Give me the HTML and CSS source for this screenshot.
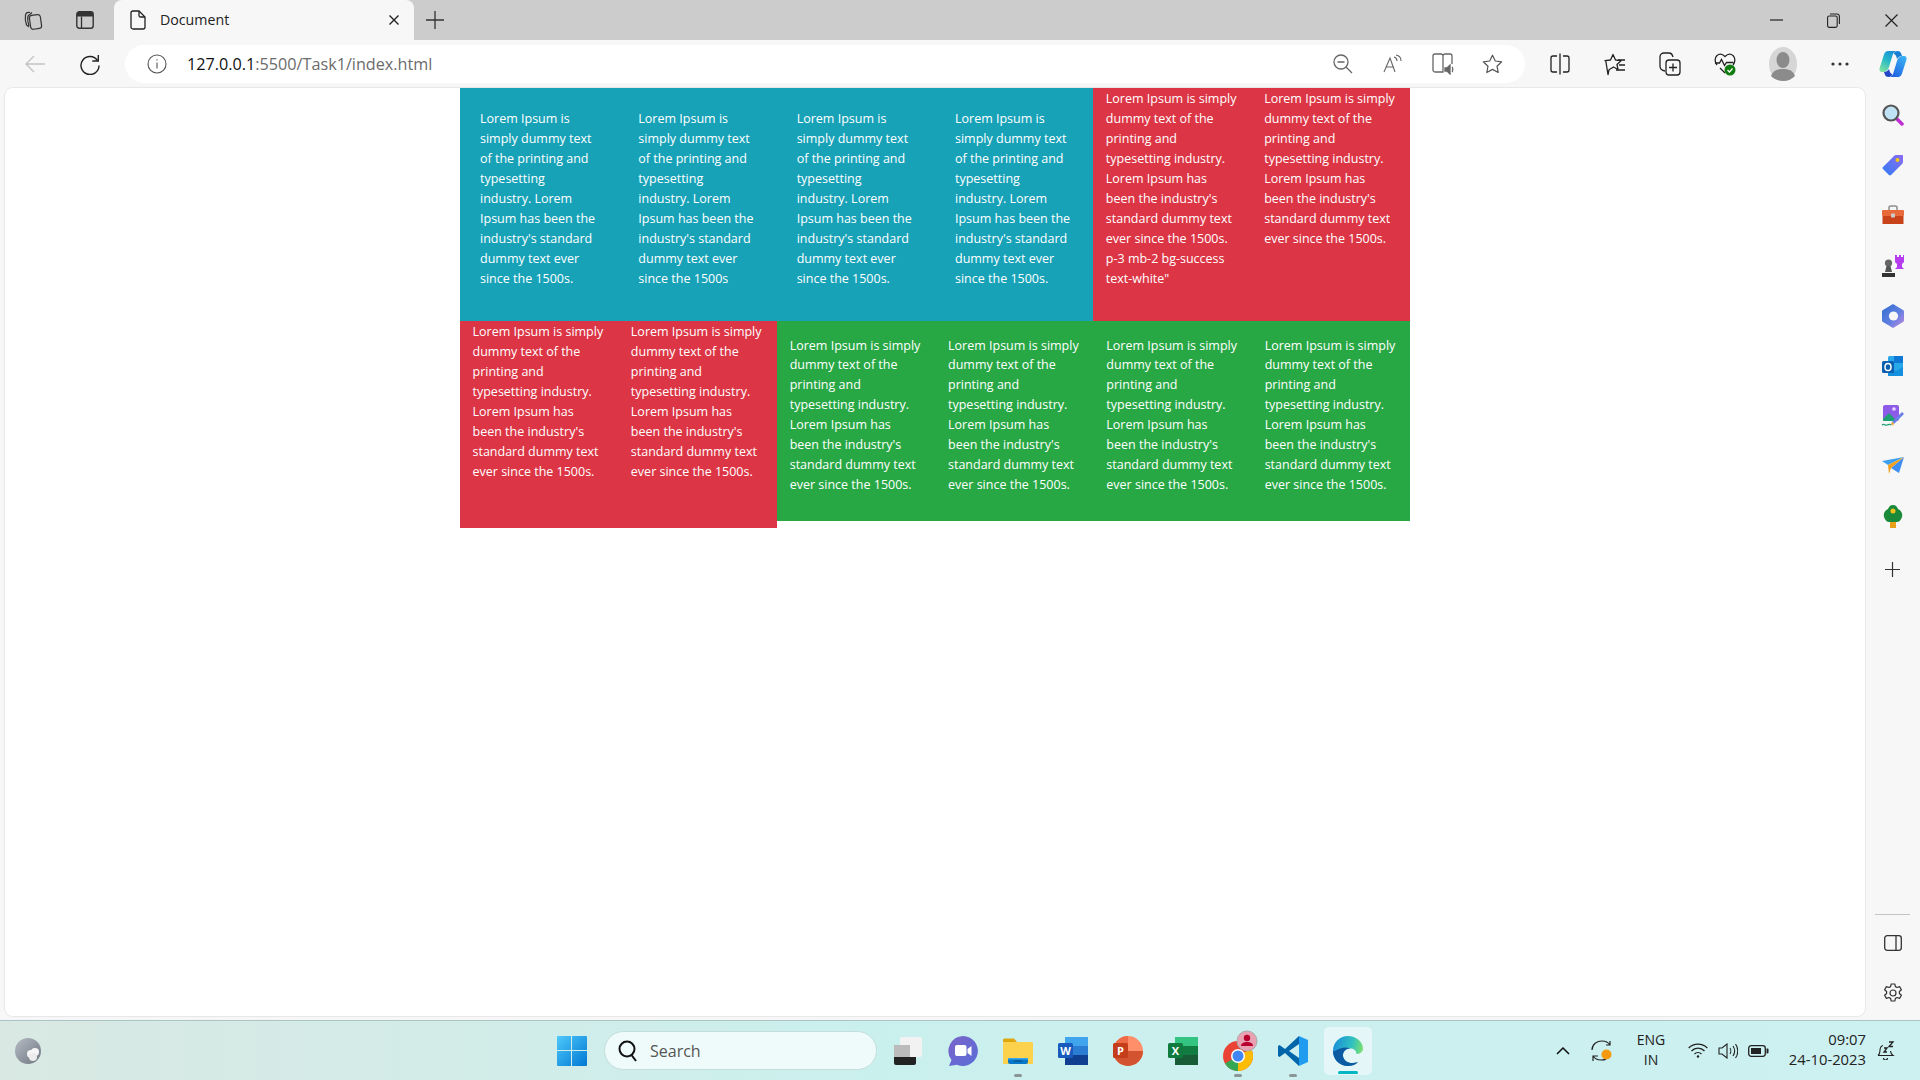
FILE: index.html
```html
<!DOCTYPE html>
<html lang="en">
<head>
<meta charset="utf-8">
<title>Document</title>
<link rel="stylesheet" href="styles.css">
</head>
<body>
<div class="titlebar">
  <div class="slot-t"><svg width="20" height="22" viewBox="0 0 20 22" fill="none" stroke="#333" stroke-width="1.2"><rect x="7" y="6" width="11" height="14" rx="2.5" transform="rotate(-8 12 13)"/><path d="M6 18 3.5 16C2.5 13 2 9 2.5 6 3 3.5 5 3 7 3.5M9 3.5 5 7c-.7 3 0 7 1 10"/></svg></div>
  <div class="slot-t"><svg width="18" height="18" viewBox="0 0 18 18" fill="none"><rect x=".8" y=".8" width="16.4" height="16.4" rx="2.5" stroke="#333" stroke-width="1.4"/><path d="M1 3.3A2.3 2.3 0 0 1 3.3 1h11.4A2.3 2.3 0 0 1 17 3.3V5.5H1Z" fill="#333"/><path d="M5.5 5.5V17" stroke="#333" stroke-width="1.3"/></svg></div>
  <div class="tab">
    <svg class="tab-file" width="16" height="20" viewBox="0 0 16 20" fill="none" stroke="#222" stroke-width="1.3"><path d="M3 1h6l6 6v10a2 2 0 0 1-2 2H3a2 2 0 0 1-2-2V3a2 2 0 0 1 2-2Z"/><path d="M9 1v4.500A1.500 1.500 0 0 0 10.500 7H15"/></svg>
    <span class="tab-title">Document</span>
    <svg class="tab-close" width="10" height="10" viewBox="0 0 10 10" stroke="#222" stroke-width="1.4"><path d="M.5.5l9 9M9.500.5l-9 9"/></svg>
  </div>
  <div class="slot-new"><svg width="18" height="18" viewBox="0 0 18 18" stroke="#333" stroke-width="1.3"><path d="M9 0v18M0 9h18"/></svg></div>
  <div class="winctl">
    <div class="slot-w"><svg width="13" height="2" viewBox="0 0 13 2" stroke="#222" stroke-width="1.2"><path d="M0 1h13"/></svg></div>
    <div class="slot-w"><svg width="13" height="15" viewBox="0 0 13 15" fill="none" stroke="#222" stroke-width="1.1"><rect x=".6" y="3" width="9.600" height="11.400" rx="1.600"/><path d="M3 1h7a2.400 2.400 0 0 1 2.400 2.400V11"/></svg></div>
    <div class="slot-w"><svg width="13" height="13" viewBox="0 0 13 13" stroke="#222" stroke-width="1.2"><path d="M.5.5l12 12M12.500.5l-12 12"/></svg></div>
  </div>
</div>

<div class="toolbar">
  <div class="slot-b"><svg width="20" height="18" viewBox="0 0 20 18" fill="none" stroke="#c4c4c4" stroke-width="1.4"><path d="M20 9H1M9 1 1 9l8 8"/></svg></div>
  <div class="slot-b"><svg width="20" height="21" viewBox="0 0 20 21" fill="none" stroke="#222" stroke-width="1.4"><path d="M17.500 6.500A9 9 0 1 0 19 11.500"/><path d="M18.300 1v6h-6"/></svg></div>
  <div class="address">
    <svg class="addr-info" width="20" height="20" viewBox="0 0 20 20" fill="none" stroke="#555" stroke-width="1.1"><circle cx="10" cy="10" r="9"/><path d="M10 8.500v6M10 5.200v1.300"/></svg>
    <span class="url"><span class="url-host">127.0.0.1</span>:5500/Task1/index.html</span>
    <div class="addr-tools">
      <div class="slot-a"><svg width="20" height="20" viewBox="0 0 20 20" fill="none" stroke="#666" stroke-width="1.300"><circle cx="8" cy="8" r="7"/><path d="M4.500 8h7M13 13l6 6"/></svg></div>
      <div class="slot-a"><svg width="20" height="20" viewBox="0 0 20 20" fill="none" stroke="#666" stroke-width="1.100"><path d="M1 18 7 4l5 14M3 13h8M11 3c2 .5 3 2 3 4M13 1c3 .5 5 3 5 6"/></svg></div>
      <div class="slot-a"><svg width="22" height="22" viewBox="0 0 22 22" fill="none" stroke="#666" stroke-width="1.300"><path d="M11 3.500V19H3a2 2 0 0 1-2-2V3a2 2 0 0 1 2-2h6a2 2 0 0 1 2 2.500c0-1.500 1-2.500 2-2.500h5a2 2 0 0 1 2 2v8"/><path d="M13 15h2l3-3v9l-3-3h-2Z" fill="#666"/><path d="M20 14c1 1 1 4 0 5"/></svg></div>
      <div class="slot-a"><svg width="21" height="20" viewBox="0 0 21 20" fill="none" stroke="#555" stroke-width="1.200"><path d="M10.500 1.200 13.300 7l6.400.8-4.700 4.400 1.200 6.300-5.700-3.100-5.700 3.100L6 12.200 1.300 7.800 7.700 7Z" stroke-linejoin="round"/></svg></div>
    </div>
  </div>
  <div class="tools">
    <div class="slot-b"><svg width="20" height="22" viewBox="0 0 20 22" fill="none" stroke="#222" stroke-width="1.300"><path d="M7 3H3a2 2 0 0 0-2 2v12a2 2 0 0 0 2 2h4M13 3h4a2 2 0 0 1 2 2v12a2 2 0 0 1-2 2h-4M10 .5v21"/></svg></div>
    <div class="slot-b"><svg width="22" height="23" viewBox="0 0 22 23" fill="none" stroke="#222" stroke-width="1.300"><path d="M9 1.500 11.500 7l5.500.7-4 3.800 1 5-4.500-2.500L5 16.800l-1 4.700L1.800 8 1 7.700 6.500 7Z" stroke-linejoin="round"/><path d="M14 7h7M15 12h6M12 17h9"/></svg></div>
    <div class="slot-b"><svg width="22" height="24" viewBox="0 0 22 24" fill="none" stroke="#222" stroke-width="1.300"><path d="M6 19c-3-.5-5-2-5-5V5c0-2.500 2-4 4-4h5c2.500 0 3.500 2 4 4"/><rect x="7" y="8" width="14" height="15" rx="3"/><path d="M14 11.500v8M10 15.500h8"/></svg></div>
    <div class="slot-b"><svg width="22" height="24" viewBox="0 0 22 24" fill="none"><path d="M3 13C.5 10 .5 6 3 3.500c2.500-2 5.500-1.500 8 1 2.500-2.500 5.500-3 8-1 2.500 2.500 2.500 6.500 0 9.500M11 21l-5-5" stroke="#222" stroke-width="1.300"/><path d="M1 11h4.500l2-3.500 3 6 2-3h7" stroke="#222" stroke-width="1.300"/><circle cx="16" cy="18" r="5.500" fill="#107c10"/><path d="M13.500 18l2 2 3-3.500" stroke="#fff" stroke-width="1.200" fill="none"/></svg></div>
    <div class="slot-b slot-avatar"><svg width="30" height="34" viewBox="0 0 30 34"><ellipse cx="15" cy="17" rx="14" ry="17" fill="#d6d6d6"/><ellipse cx="15" cy="13" rx="6.500" ry="8" fill="#8b8b8b"/><path d="M3 29c2-6 7-7 12-7s10 1 12 7c-3 3-7 5-12 5s-9-2-12-5Z" fill="#8b8b8b"/></svg></div>
    <div class="slot-b slot-dots"><svg width="18" height="4" viewBox="0 0 18 4" fill="#333"><circle cx="2" cy="2" r="1.600"/><circle cx="9" cy="2" r="1.600"/><circle cx="16" cy="2" r="1.600"/></svg></div>
    <div class="slot-b slot-copilot"><svg width="28" height="28" viewBox="0 0 28 28"><defs><linearGradient id="cp1" x1="0.700" y1="0" x2="0.200" y2="1"><stop offset="0" stop-color="#1b8fd8"/><stop offset=".45" stop-color="#25b8c8"/><stop offset="1" stop-color="#7fe2a0"/></linearGradient><linearGradient id="cp2" x1="0.800" y1="0" x2="0.200" y2="1"><stop offset="0" stop-color="#3ab0f5"/><stop offset="1" stop-color="#1f5fe0"/></linearGradient></defs><path d="M9 1h9.500c-2.500 0-4 1.500-4.700 3.500L10 17c-.8 2.500-2.500 5-6 5H3c-2 0-3-1.500-2.500-3.500L5 4.500C5.700 2.500 7 1 9 1Z" fill="url(#cp1)"/><path d="M19 27H9.500c2.500 0 4-1.500 4.700-3.500L18 11c.8-2.500 2.500-5 6-5h1c2 0 3 1.500 2.500 3.500L23 23.500C22.300 25.500 21 27 19 27Z" fill="url(#cp2)"/><path d="M18.500 1c2 0 3.500 1 4 3.500L23 6c-2 0-4 1-5 3-.5-3-2-5-3.500-5.500C15.500 2 17 1 18.500 1Z" fill="#1a7fd4"/><path d="M9.500 27c-2 0-3.500-1-4-3.500L5 22c2 0 4-1 5-3 .5 3 2 5 3.500 5.500C12.500 26 11 27 9.500 27Z" fill="#2347c8"/></svg></div>
  </div>
</div>

<div class="middle">
  <div class="viewport">
    <div class="sheet">
      <div class="row">
        <div class="group group-wide">
          <p class="cell cell-info">Lorem Ipsum is simply dummy text of the printing and typesetting industry. Lorem Ipsum has been the industry's standard dummy text ever since the 1500s.</p>
          <p class="cell cell-info">Lorem Ipsum is simply dummy text of the printing and typesetting industry. Lorem Ipsum has been the industry's standard dummy text ever since the 1500s</p>
          <p class="cell cell-info">Lorem Ipsum is simply dummy text of the printing and typesetting industry. Lorem Ipsum has been the industry's standard dummy text ever since the 1500s.</p>
          <p class="cell cell-info">Lorem Ipsum is simply dummy text of the printing and typesetting industry. Lorem Ipsum has been the industry's standard dummy text ever since the 1500s.</p>
        </div>
        <div class="group group-narrow">
          <p class="cell cell-danger">Lorem Ipsum is simply dummy text of the printing and typesetting industry. Lorem Ipsum has been the industry's standard dummy text ever since the 1500s. p-3 mb-2 bg-success text-white"</p>
          <p class="cell cell-danger">Lorem Ipsum is simply dummy text of the printing and typesetting industry. Lorem Ipsum has been the industry's standard dummy text ever since the 1500s.</p>
        </div>
      </div>
      <div class="row row-top">
        <div class="group group-narrow group-danger">
          <p class="cell cell-danger">Lorem Ipsum is simply dummy text of the printing and typesetting industry. Lorem Ipsum has been the industry's standard dummy text ever since the 1500s.</p>
          <p class="cell cell-danger">Lorem Ipsum is simply dummy text of the printing and typesetting industry. Lorem Ipsum has been the industry's standard dummy text ever since the 1500s.</p>
        </div>
        <div class="group group-wide group-success">
          <p class="cell cell-success">Lorem Ipsum is simply dummy text of the printing and typesetting industry. Lorem Ipsum has been the industry's standard dummy text ever since the 1500s.</p>
          <p class="cell cell-success">Lorem Ipsum is simply dummy text of the printing and typesetting industry. Lorem Ipsum has been the industry's standard dummy text ever since the 1500s.</p>
          <p class="cell cell-success">Lorem Ipsum is simply dummy text of the printing and typesetting industry. Lorem Ipsum has been the industry's standard dummy text ever since the 1500s.</p>
          <p class="cell cell-success">Lorem Ipsum is simply dummy text of the printing and typesetting industry. Lorem Ipsum has been the industry's standard dummy text ever since the 1500s.</p>
        </div>
      </div>
    </div>
  </div>
  <div class="sidebar">
    <div class="side-top">
      <div class="slot-s"><svg width="22" height="22" viewBox="0 0 22 22"><path d="M13 13l7 7" stroke="#c02fd0" stroke-width="3.500" stroke-linecap="round"/><circle cx="9" cy="9" r="7.500" fill="#bfe3f5" stroke="#555" stroke-width="2.200"/></svg></div>
      <div class="slot-s"><svg width="22" height="22" viewBox="0 0 22 22"><defs><linearGradient id="sd1" x1="0" y1="1" x2="1" y2="0"><stop offset="0" stop-color="#2f7cf6"/><stop offset="1" stop-color="#8c6cf0"/></linearGradient></defs><path d="M1 13 12 2c.6-.6 1.200-1 2-1h6c.6 0 1 .4 1 1v6c0 .8-.3 1.400-1 2L9 21c-.6.600-1.400.600-2 0l-6-6c-.6-.6-.6-1.400 0-2Z" fill="url(#sd1)"/><circle cx="15.500" cy="6" r="2" fill="#f5c518"/></svg></div>
      <div class="slot-s"><svg width="24" height="20" viewBox="0 0 24 20"><path d="M8 5V2.500C8 1.500 9 1 10 1h4c1 0 2 .5 2 1.500V5" fill="none" stroke="#8d8d8d" stroke-width="1.500"/><rect x="1" y="5" width="22" height="6" rx="1" fill="#e8693a"/><rect x="1.500" y="11" width="21" height="8" fill="#c8431a"/><rect x="10" y="8.500" width="4" height="4" rx=".8" fill="#ccc"/></svg></div>
      <div class="slot-s"><svg width="24" height="24" viewBox="0 0 24 24"><path d="M14 1h2v2h2V1h2v2h2V1h1v7l-2 2v3l2 2H14l2-2v-3l-2-2Z" fill="#b63cf0"/><circle cx="7.500" cy="9" r="3.600" fill="#666"/><path d="M5.500 12h4l1.500 6H4Z" fill="#555"/><path d="M1 19h13v4H1Z" fill="#333"/></svg></div>
      <div class="slot-s"><svg width="22" height="24" viewBox="0 0 22 24"><defs><linearGradient id="sd2" x1="0" y1="0" x2="1" y2="1"><stop offset="0" stop-color="#2f6cd0"/><stop offset=".55" stop-color="#5f7fe0"/><stop offset="1" stop-color="#c08ae0"/></linearGradient></defs><path d="M11 0 21 6c.6.4 1 1 1 2v8c0 1-.4 1.600-1 2l-10 6-10-6c-.6-.4-1-1-1-2V8c0-1 .4-1.600 1-2Z" fill="url(#sd2)"/><circle cx="11.500" cy="12" r="4.600" fill="#f7f7f7"/></svg></div>
      <div class="slot-s"><svg width="22" height="22" viewBox="0 0 22 22"><rect x="6" y="1" width="15" height="20" rx="1.500" fill="#28a8ea"/><rect x="12" y="1" width="9" height="7" fill="#0f78d4"/><path d="M6 12l8 4 7-4v9H6Z" fill="#1490df"/><rect x="0" y="6" width="12" height="12" rx="1.500" fill="#0a5fb0"/><ellipse cx="6" cy="12" rx="3" ry="3.600" fill="none" stroke="#fff" stroke-width="1.500"/></svg></div>
      <div class="slot-s"><svg width="24" height="24" viewBox="0 0 24 24"><rect x="2" y="1" width="16" height="16" rx="2" fill="#8e5be8"/><path d="M2 15l6-6 6 6v2H2Z" fill="#1e9f75"/><circle cx="13" cy="5" r="1.800" fill="#e8d8ff"/><path d="M11 18 21 8l2 2-10 10-3 1Z" fill="#6a7ee8"/><path d="M10 20c1-2 2-2 3-1l-1 3Z" fill="#f2b43a"/><path d="M1 21c2-2 3 1 5 0s3-1 4 0" stroke="#1e9f75" stroke-width="1.200" fill="none"/></svg></div>
      <div class="slot-s"><svg width="22" height="18" viewBox="0 0 22 18"><path d="M0 4 22 0 6 8Z" fill="#3fa0f0"/><path d="M22 0 17 16 9 11Z" fill="#3f8ff0"/><path d="M6 8 22 0 9 11l-2 6Z" fill="#f2a01e"/></svg></div>
      <div class="slot-s"><svg width="20" height="23" viewBox="0 0 20 23"><rect x="7" y="15" width="6" height="8" fill="#e8a018"/><path d="M10 0c3 0 4 2 5 4 3 1 5 5 4 8-1 3-3 5-5 5H6c-2 0-4-2-5-5C0 9 2 5 5 4c1-2 2-4 5-4Z" fill="#1a8a3a"/><circle cx="10" cy="6" r="2.500" fill="#f2c21e"/></svg></div>
      <div class="slot-s slot-add"><svg width="15" height="15" viewBox="0 0 15 15" stroke="#333" stroke-width="1.200"><path d="M7.500 0v15M0 7.500h15"/></svg></div>
    </div>
    <div class="side-bottom">
      <div class="side-rule"></div>
      <div class="slot-s"><svg width="18" height="16" viewBox="0 0 18 16" fill="none" stroke="#333" stroke-width="1.300"><rect x=".7" y=".7" width="16.600" height="14.600" rx="2.500"/><path d="M12 .7v14.600"/></svg></div>
      <div class="slot-s"><svg width="20" height="20" viewBox="0 0 20 20" fill="none" stroke="#333" stroke-width="1.200"><circle cx="10" cy="10" r="3"/><path d="M8.200 1h3.600l.6 2.600 1.700.9 2.500-.9 1.800 3.100-2 1.800v2l2 1.800-1.800 3.100-2.500-.9-1.700.9-.6 2.600H8.200l-.6-2.600-1.700-.9-2.500.9-1.800-3.100 2-1.800v-2l-2-1.800 1.800-3.100 2.500.9 1.700-.9Z" stroke-linejoin="round"/></svg></div>
    </div>
  </div>
</div>

<div class="taskbar">
  <div class="slot-weather"><svg width="28" height="28" viewBox="0 0 28 28"><defs><linearGradient id="wx" x1="0" y1="0" x2="1" y2="1"><stop offset="0" stop-color="#b6bcc4"/><stop offset="1" stop-color="#6f7680"/></linearGradient></defs><ellipse cx="14" cy="14" rx="13" ry="13" fill="url(#wx)"/><circle cx="17" cy="17" r="4" fill="#f6f6f6"/><circle cx="21" cy="15" r="4" fill="#f6f6f6"/><circle cx="19" cy="20" r="4" fill="#ececec"/></svg></div>
  <div class="slot-task slot-start"><svg width="30" height="30" viewBox="0 0 30 30"><defs><linearGradient id="win" x1="0" y1="0" x2="1" y2="1"><stop offset="0" stop-color="#4fc8fa"/><stop offset="1" stop-color="#0078d4"/></linearGradient></defs><path d="M0 1a1 1 0 0 1 1-1h13v14H0ZM15 0h14a1 1 0 0 1 1 1v13H15ZM0 15h14v15H1a1 1 0 0 1-1-1ZM15 15h15v14a1 1 0 0 1-1 1H15Z" fill="url(#win)"/></svg></div>
  <div class="search">
    <svg width="20" height="22" viewBox="0 0 20 22" fill="none" stroke="#111" stroke-width="2"><circle cx="9" cy="9" r="7.500"/><path d="M13.500 15l4.500 6"/></svg>
    <span class="search-label">Search</span>
  </div>
  <div class="slot-task slot-view"><svg width="28" height="28" viewBox="0 0 28 28"><rect x="0" y="8" width="22" height="20" rx="2" fill="#222"/><rect x="6" y="0" width="22" height="20" rx="2" fill="#f2f2f2"/><rect x="0" y="8" width="16" height="12" fill="#bbb"/></svg></div>
  <div class="slot-task"><svg width="30" height="30" viewBox="0 0 30 30"><defs><linearGradient id="meet" x1="0" y1="0" x2="1" y2="1"><stop offset="0" stop-color="#7a63c9"/><stop offset="1" stop-color="#5a6ed8"/></linearGradient></defs><path d="M15 0a15 15 0 1 1-6 28.800L1 30l2.500-6A15 15 0 0 1 15 0Z" fill="url(#meet)"/><rect x="7" y="9" width="11.500" height="11" rx="2" fill="#fff"/><path d="M19.500 13l4-3v10l-4-3Z" fill="#fff"/></svg></div>
  <div class="slot-task pin"><svg width="30" height="26" viewBox="0 0 30 26"><path d="M0 2a1.500 1.500 0 0 1 1.500-1.500H11L14 4H0Z" fill="#dea70e"/><rect x="0" y="4" width="30" height="22" rx="1" fill="#fcd24c"/><rect x="5" y="20" width="20" height="6" rx="2" fill="#0a78c8"/><rect x="5" y="20" width="20" height="1.500" fill="#38a6e8"/><rect x="11" y="22.500" width="8" height="1.200" fill="#064f8a"/></svg></div>
  <div class="slot-task"><svg width="30" height="28" viewBox="0 0 30 28"><rect x="7" y="0" width="23" height="9" fill="#41a5ee"/><rect x="7" y="9" width="23" height="9" fill="#2b7cd3"/><rect x="7" y="18" width="23" height="10" fill="#103f91"/><rect x="0" y="6" width="15" height="15" rx="1.500" fill="#185abd"/><text class="tile-letter" x="7.500" y="17.500">W</text></svg></div>
  <div class="slot-task"><svg width="30" height="30" viewBox="0 0 30 30"><circle cx="15" cy="15" r="15" fill="#ff8f6b"/><path d="M15 15V0A15 15 0 0 0 0 15Z" fill="#ed6c47"/><path d="M0 15h30a15 15 0 0 1-30 0Z" fill="#d35230"/><rect x="0" y="7" width="15" height="15" rx="1.500" fill="#c43e1c"/><text class="tile-letter" x="7.500" y="18.500">P</text></svg></div>
  <div class="slot-task"><svg width="30" height="28" viewBox="0 0 30 28"><rect x="7" y="0" width="23" height="9" fill="#33c481"/><rect x="7" y="9" width="23" height="9" fill="#107c41"/><rect x="7" y="18" width="23" height="10" fill="#185c37"/><rect x="0" y="6" width="15" height="15" rx="1.500" fill="#0f7b3f"/><text class="tile-letter" x="7.500" y="17.500">X</text></svg></div>
  <div class="slot-task pin"><svg width="54" height="42" viewBox="-12 0 54 42"><g transform="translate(0 10)"><circle cx="15" cy="16" r="15" fill="#ea4335"/><path d="M15 16 2 23.500A15 15 0 0 0 15 31Z" fill="#34a853"/><path d="M15 16V31A15 15 0 0 0 28 8.500Z" fill="#fbbc04"/><circle cx="15" cy="16" r="7" fill="#fff"/><circle cx="15" cy="16" r="5.500" fill="#4285f4"/></g><circle cx="24" cy="11" r="10" fill="#e9a2b2" stroke="#aaa"/><circle cx="24" cy="8" r="3.200" fill="#b8002f"/><path d="M18 16c0-3 3-4 6-4s6 1 6 4Z" fill="#b8002f"/></svg></div>
  <div class="slot-task pin"><svg width="30" height="30" viewBox="0 0 30 30"><path d="M21 0 30 4v22l-9 4Z" fill="#1f9cf0"/><path d="M21 0 7 13 1.500 9 0 10v10l1.500 1L7 17l14 13v-8L11 15l10-7Z" fill="#0065a9"/></svg></div>
  <div class="slot-task slot-active"><svg width="30" height="30" viewBox="0 0 30 30"><defs><linearGradient id="edge" x1="0" y1="0.300" x2="1" y2="0.500"><stop offset="0" stop-color="#1b8fd8"/><stop offset=".6" stop-color="#30c0c0"/><stop offset="1" stop-color="#7fe26a"/></linearGradient></defs><path d="M15 0C6 0 0 7 0 15c0 8 6 15 15 15 4 0 8-1.500 10-4-7 2.500-14 .5-15-6-.5-4 3-7.500 7-7.500 4 0 6 2 6.500 5H22c4 1 8-1 8-5C30 6 23 0 15 0Z" fill="url(#edge)"/><path d="M0 15c0 8 6 15 15 15 4 0 8-1.500 10-4-7 2.500-14 .5-15-6-.5-4 3-7.500 7-7.500-4-2-8-1-11 .5C3 14 1 16 0 15Z" fill="#0c59a4"/></svg></div>
  <div class="tray">
    <div class="slot-tray slot-chev"><svg width="14" height="8" viewBox="0 0 14 8" fill="none" stroke="#111" stroke-width="1.500"><path d="M1 7l6-6 6 6"/></svg></div>
    <div class="slot-tray slot-sync"><svg width="24" height="22" viewBox="0 0 24 22"><path d="M1 10C1 4 6 1 11 1c3 0 6 1 8 4M19 1v4h-4M15 19c-1 1-3 1-5 1-3 0-6-1-8-4M2 21v-5h5" fill="none" stroke="#222" stroke-width="1.200"/><circle cx="15.500" cy="14.500" r="5" fill="#f59a0c"/></svg></div>
    <div class="lang"><span>ENG</span><span>IN</span></div>
    <div class="slot-tray slot-icon slot-wifi"><svg width="20" height="15" viewBox="0 0 20 15" fill="none" stroke="#222" stroke-width="1.300"><path d="M.7 5a13 13 0 0 1 18.600 0M3.500 8a9 9 0 0 1 13 0M6.500 11a5 5 0 0 1 7 0"/><circle cx="10" cy="13.500" r="1.200" fill="#222" stroke="none"/></svg></div>
    <div class="slot-tray slot-icon"><svg width="20" height="16" viewBox="0 0 20 16" fill="none" stroke="#222" stroke-width="1.100"><path d="M1 5h3l5-4v14l-5-4H1Z"/><path d="M12 5c1 1.500 1 4.500 0 6M15 3c2 3 2 7 0 10M17.500 1c3 4 3 10 0 14"/></svg></div>
    <div class="slot-tray slot-icon"><svg width="21" height="12" viewBox="0 0 21 12"><rect x=".7" y=".7" width="16.600" height="10.600" rx="2.500" fill="none" stroke="#222" stroke-width="1.300"/><rect x="3" y="3" width="10" height="6" fill="#222"/><path d="M18.500 3.500h1a1 1 0 0 1 1 1v3a1 1 0 0 1-1 1h-1Z" fill="#222"/></svg></div>
    <div class="clock"><span>09:07</span><span>24-10-2023</span></div>
    <div class="slot-tray slot-bell"><svg width="18" height="19" viewBox="0 0 18 19" fill="none" stroke="#222" stroke-width="1.100"><path d="M1 14.500c1.500-1 2-2.500 2-5C3 7 4 5 6 4.500M13.500 10c.2 2 1 3.500 2.500 4.500H1M6.500 17a2 2 0 0 0 4 0"/><path d="M7 7h3L7 11h3M12 1h4l-4 4.500h4" stroke-width="1.300"/></svg></div>
  </div>
</div>
</body>
</html>
```

FILE: styles.css
```css
* { box-sizing: border-box; }
html, body { margin: 0; height: 100%; }
body {
  display: flex;
  flex-direction: column;
  height: 1080px;
  overflow: hidden;
  background: #f7f7f7;
  font-family: "Open Sans", "Noto Sans", sans-serif;
  color: #222;
}
svg { display: block; flex: none; }

/* title bar */
.titlebar { display: flex; height: 40px; padding-left: 7px; background: #cccccc; flex: none; }
.slot-t { width: 52px; display: flex; align-items: center; justify-content: center; }
.tab {
  display: flex; align-items: center;
  width: 300px; height: 40px; margin-left: 3px;
  padding: 0 15px 0 16px;
  background: #f7f7f7;
  border-radius: 8px 8px 0 0;
}
.tab-title { margin: -2px 0 0 14px; font-size: 14.2px; color: #222; flex: 1; }
.slot-new { width: 42px; display: flex; align-items: center; justify-content: center; }
.winctl { display: flex; margin-left: auto; }
.slot-w { width: 57.5px; display: flex; align-items: center; justify-content: center; }

/* toolbar */
.toolbar { display: flex; align-items: center; height: 48px; padding-left: 7.5px; flex: none; }
.slot-b { width: 55px; height: 38px; display: flex; align-items: center; justify-content: center; flex: none; }
.address {
  display: flex; align-items: center;
  width: 1400px; height: 38px; margin-left: 7.5px;
  padding: 0 7px 0 22px;
  background: #fff;
  border-radius: 19px;
}
.url { margin-left: 20px; font-size: 16.2px; color: #6b6b6b; }
.url-host { color: #111; }
.addr-tools { display: flex; margin-left: auto; }
.slot-a { width: 50px; display: flex; align-items: center; justify-content: center; }
.tools { display: flex; margin-left: 7.5px; }
.slot-avatar { margin-left: 3px; }
.slot-dots { margin-left: 2px; }
.slot-copilot { margin-left: -2px; }

/* page area */
.middle { display: flex; flex: 1; min-height: 0; }
.viewport {
  flex: 1;
  margin: 0 0 4px 5px;
  background: #fff;
  border-radius: 8px;
  box-shadow: 0 0 0 1px #e8e8e8;
  overflow: hidden;
}
.sheet { width: 950px; margin: 0 auto; color: #fff; font-size: 12.5px; line-height: 20px; }
.row { display: flex; }
.row-top { align-items: flex-start; }
.group { display: flex; min-width: 0; }
.group-wide { flex: 4 1 0; }
.group-narrow { flex: 2 1 0; }
.group-danger { height: 207px; background: #dc3545; }
.group-success { height: 200px; background: #28a745; }
.cell { flex: 1 1 0; min-width: 0; margin: 0; }
.cell-info { padding: 21px 20px 32px; background: #17a2b8; }
.cell-danger { padding: 1px 12.5px 0; background: #dc3545; }
.cell-success { padding: 14.6px 13px 0; line-height: 19.86px; background: #28a745; }

/* edge sidebar */
.sidebar { width: 55px; flex: none; display: flex; flex-direction: column; justify-content: space-between; padding-top: 2px; }
.side-top, .side-bottom { display: flex; flex-direction: column; align-items: center; }
.slot-s { width: 55px; height: 50.2px; display: flex; align-items: center; justify-content: center; }
.slot-add { margin-top: 3px; }
.side-rule { width: 35px; height: 1px; background: #c4c4c4; margin-bottom: 3px; }
.side-bottom { padding-bottom: 1.5px; }

/* taskbar */
.taskbar {
  display: flex; align-items: center;
  height: 60px; flex: none;
  border-top: 1px solid #a9c4c3;
  background: linear-gradient(90deg, #d9e8e3 0%, #d2ece8 25%, #caf0ee 45%, #cdf0f0 100%);
}
.slot-weather { width: 56px; display: flex; justify-content: center; }
.slot-task { position: relative; width: 55px; height: 48px; display: flex; align-items: center; justify-content: center; flex: none; }
.slot-start { width: 56px; margin-left: 488px; }
.search {
  display: flex; align-items: center;
  width: 273px; height: 39px; margin-left: 4px; padding-left: 13px;
  background: #eefbfa;
  border: 1px solid #c3dedd;
  border-radius: 20px;
}
.search-label { margin-left: 12px; font-size: 16px; color: #555; }
.slot-view { margin-left: 3px; }
.pin::after {
  content: ""; position: absolute; left: 50%; bottom: -2px;
  width: 8px; height: 3px; margin-left: -4px;
  border-radius: 2px; background: #8a9695;
}
.slot-active { width: 48px; margin-left: 4px; background: #e4f6f7; border-radius: 5px; }
.slot-active::after {
  content: ""; position: absolute; left: 50%; bottom: 1px;
  width: 20px; height: 3px; margin-left: -10px;
  border-radius: 2px; background: #00b7c3;
}
.tile-letter { font: 700 11px "Open Sans", sans-serif; fill: #fff; text-anchor: middle; }
.tray { display: flex; align-items: center; margin-left: auto; }
.slot-tray { display: flex; align-items: center; justify-content: center; flex: none; }
.slot-chev, .slot-sync { width: 40px; }
.slot-bell { width: 40px; margin-right: 14px; }
.slot-icon { width: 30px; }
.slot-wifi { margin-left: 4px; }
.lang { width: 56px; margin-top: -2px; display: flex; flex-direction: column; align-items: center; font-size: 14px; line-height: 20px; color: #222; }
.clock { width: 93px; margin-top: -4px; display: flex; flex-direction: column; align-items: flex-end; font-size: 14.8px; line-height: 20px; color: #222; }
```
